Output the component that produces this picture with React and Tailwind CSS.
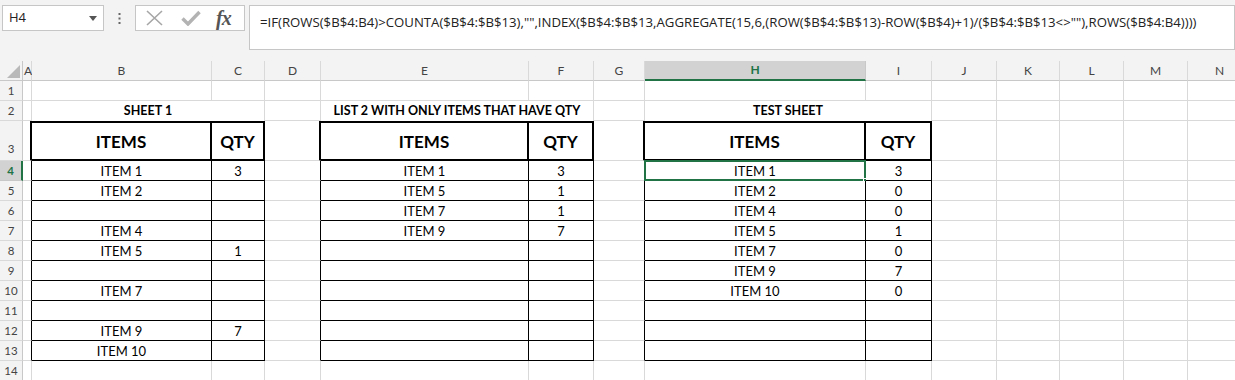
import React from "react";

const COLS = ["A", "B", "C", "D", "E", "F", "G", "H", "I", "J", "K", "L", "M", "N"];
const TABLES = [[1, 2], [4, 5], [7, 8]];
const DATA = {
  1: ["ITEM 1", "ITEM 2", "", "ITEM 4", "ITEM 5", "", "ITEM 7", "", "ITEM 9", "ITEM 10"],
  2: ["3", "", "", "", "1", "", "", "", "7", ""],
  4: ["ITEM 1", "ITEM 5", "ITEM 7", "ITEM 9", "", "", "", "", "", ""],
  5: ["3", "1", "1", "7", "", "", "", "", "", ""],
  7: ["ITEM 1", "ITEM 2", "ITEM 4", "ITEM 5", "ITEM 7", "ITEM 9", "ITEM 10", "", "", ""],
  8: ["3", "0", "0", "1", "0", "7", "0", "", "", ""],
};
const TITLES = { 1: "SHEET 1", 4: "LIST 2 WITH ONLY ITEMS THAT HAVE QTY", 7: "TEST SHEET" };
const FORMULA =
  '=IF(ROWS($B$4:B4)>COUNTA($B$4:$B$13),"",INDEX($B$4:$B$13,AGGREGATE(15,6,(ROW($B$4:$B$13)-ROW($B$4)+1)/($B$4:$B$13<>""),ROWS($B$4:B4))))';

const inTable = (c) => TABLES.some(([a, b]) => c >= a && c <= b);
const leftOfTable = (c) => TABLES.some(([a]) => c + 1 === a);
const isTableStart = (c) => TABLES.some(([a]) => c === a);

const RB = {
  g: "border-r border-r-[#d9d9d9]",
  b1: "border-r border-r-black",
  b2: "border-r-2 border-r-black",
};
const BB = {
  g: "border-b border-b-[#d9d9d9]",
  b1: "border-b border-b-black",
  b2: "border-b-2 border-b-black",
};

function Cell({ r, c }) {
  const tableRow = r >= 3 && r <= 13;
  let right = RB.g;
  if (tableRow && (inTable(c) || leftOfTable(c))) right = r === 3 ? RB.b2 : RB.b1;
  let bottom = BB.g;
  let top = "";
  if (tableRow && inTable(c)) bottom = r === 3 ? BB.b2 : BB.b1;
  if (r === 3 && inTable(c)) top = "border-t-2 border-t-black";

  let content = null;
  let textCls = "text-[13px] text-black";
  if (r === 3 && inTable(c)) {
    content = isTableStart(c) ? "ITEMS" : "QTY";
    textCls = "text-[17px] font-bold text-black pt-[2px]";
  } else if (r >= 4 && r <= 13 && DATA[c]) {
    content = DATA[c][r - 4];
    textCls = "text-[13px] text-black pt-[2px]";
  }

  const selected = r === 4 && c === 7;
  return (
    <div
      className={`relative bg-white flex items-center justify-center whitespace-nowrap ${right} ${bottom} ${top} ${textCls}`}
    >
      {content}
      {selected && (
        <>
          <div className="absolute -left-[1px] -top-[1px] -right-[1px] -bottom-[1px] border-2 border-[#217346]" />
          <div className="absolute -right-[4px] -bottom-[4px] w-[6px] h-[6px] bg-[#217346] border border-white" />
        </>
      )}
    </div>
  );
}

function TitleCell({ c }) {
  return (
    <div className="col-span-2 bg-white flex items-end justify-center pb-[0px] border-r border-r-[#d9d9d9] text-[12.5px] font-bold text-black whitespace-nowrap">
      {TITLES[c]}
    </div>
  );
}

function RowHeader({ r }) {
  const sel = r === 4;
  return (
    <div
      className={`flex justify-center text-[11.5px] ${r === 3 ? "items-end pb-[3px]" : "items-center"} ${
        sel
          ? "bg-[#d2d2d2] text-[#217346] font-bold border-r-2 border-r-[#217346] border-b border-b-[#c8c8c8]"
          : "bg-[#f3f3f3] text-[#444] border-r border-r-[#c8c8c8] border-b border-b-[#d9d9d9]"
      }`}
    >
      {r}
    </div>
  );
}

function ColHeader({ c }) {
  const sel = c === 7;
  return (
    <div
      className={`flex items-center justify-center text-[12px] ${
        sel
          ? "bg-[#d2d2d2] text-[#217346] font-bold border-b-2 border-b-[#217346] border-r border-r-[#c8c8c8]"
          : "bg-[#f3f3f3] text-[#444] border-b border-b-[#c8c8c8] border-r border-r-[#d9d9d9]"
      } ${c === 0 ? "justify-start pl-[1px] overflow-visible" : ""}`}
    >
      {COLS[c]}
    </div>
  );
}

export default function App() {
  const rows = [];
  for (let r = 1; r <= 14; r++) {
    rows.push(<RowHeader key={`rh${r}`} r={r} />);
    for (let c = 0; c < 14; c++) {
      if (r === 2 && TITLES[c]) {
        rows.push(<TitleCell key={`t${c}`} c={c} />);
        c++;
        continue;
      }
      rows.push(<Cell key={`${r}-${c}`} r={r} c={c} />);
    }
  }

  return (
    <div
      className="w-[1235px] h-[380px] overflow-hidden bg-[#f3f3f3]"
      style={{ fontFamily: "Lato, 'Open Sans', sans-serif" }}
    >
      {/* Formula bar */}
      <div className="h-[61px] flex items-start pt-[5px] pl-[2px]" style={{ fontFamily: "'Open Sans', 'Noto Sans', sans-serif" }}>
        <div className="w-[102px] h-[26px] bg-white border border-[#c6c6c6] flex items-center justify-between pl-[6px] pr-[6px]">
          <span className="text-[13px] text-[#222]">H4</span>
          <svg width="8" height="5" viewBox="0 0 8 5">
            <path d="M0 0 L8 0 L4 5 Z" fill="#555" />
          </svg>
        </div>
        <div className="w-[31px] h-[26px] flex items-center justify-center">
          <svg width="3" height="11" viewBox="0 0 3 11">
            <rect x="0.5" y="0" width="2" height="2" fill="#666" />
            <rect x="0.5" y="4.5" width="2" height="2" fill="#666" />
            <rect x="0.5" y="9" width="2" height="2" fill="#666" />
          </svg>
        </div>
        <div className="w-[110px] h-[26px] bg-white border border-[#c6c6c6] flex items-center pl-[9px]">
          <svg width="19" height="16" viewBox="0 0 19 16">
            <path d="M2 1 L17 15 M17 1 L2 15" stroke="#a6a6a6" strokeWidth="1.6" fill="none" />
          </svg>
          <svg className="ml-[17px]" width="20" height="16" viewBox="0 0 20 16">
            <path d="M1.5 8.5 L7 14 L18.5 2" stroke="#b3b3b3" strokeWidth="3.4" fill="none" />
          </svg>
          <span
            className="ml-[15px] text-[20px] italic font-bold text-[#555] leading-none tracking-[-1px]"
            style={{ fontFamily: "'Liberation Serif', serif" }}
          >
            fx
          </span>
        </div>
        <div className="ml-[4px] flex-1 h-[45px] bg-white border border-[#c6c6c6] pl-[10px] pt-[3px]">
          <span
            className="text-[13.2px] text-[#222] whitespace-nowrap"
            style={{ fontFamily: "'Open Sans', sans-serif" }}
          >
            {FORMULA}
          </span>
        </div>
      </div>

      {/* Sheet grid */}
      <div
        className="grid grid-cols-[23px_9px_180px_53px_56px_208px_65px_51px_221px_66px_65px_63px_64px_64px_64px] grid-rows-[20px_20px_20px_40px_repeat(11,20px)]"
        style={{ fontFamily: "Lato, sans-serif" }}
      >
        <div className="bg-[#f3f3f3] border-r border-r-[#c8c8c8] border-b border-b-[#c8c8c8] flex items-end justify-end pr-[2px] pb-[2px]">
          <svg width="13" height="13" viewBox="0 0 13 13">
            <path d="M13 0 L13 13 L0 13 Z" fill="#b9b9b9" />
          </svg>
        </div>
        {COLS.map((_, c) => (
          <ColHeader key={`ch${c}`} c={c} />
        ))}
        {rows}
      </div>
    </div>
  );
}
